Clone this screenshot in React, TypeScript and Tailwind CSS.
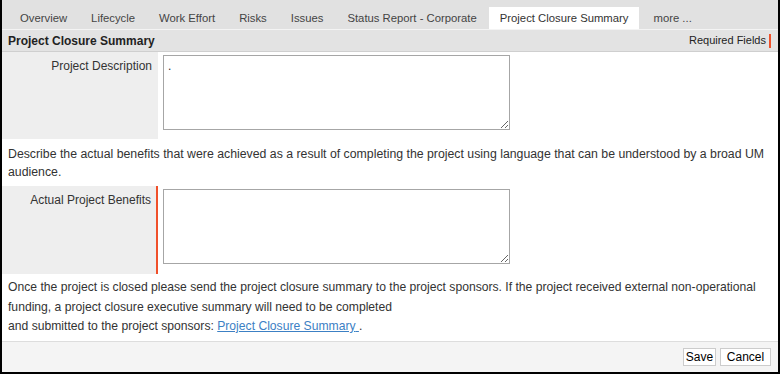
export default function App() {
  const tabs = [
    "Overview",
    "Lifecycle",
    "Work Effort",
    "Risks",
    "Issues",
    "Status Report - Corporate",
    "Project Closure Summary",
    "more ...",
  ];

  return (
    <div className="w-[780px] h-[374px] bg-white border-x-2 border-b-2 border-black overflow-hidden text-[12px] text-[#333] font-['Liberation_Sans',Arial,sans-serif]">
      {/* tab strip */}
      <div className="h-[29px] bg-[#e1e1e1] flex items-end pl-[6px] text-[11.3px]">
        {tabs.map((t) => (
          <div
            key={t}
            className={
              t === "Project Closure Summary"
                ? "h-[22px] px-[11px] flex items-center bg-white text-[#333] mr-[2px]"
                : "h-[22px] px-[12px] flex items-center text-[#444]"
            }
          >
            {t}
          </div>
        ))}
      </div>

      {/* section header */}
      <div className="h-[23px] bg-[#e3e3e3] border-t border-[#f4f4f4] border-b border-b-[#cfcfcf] flex items-center justify-between pl-[6px] pr-[7px]">
        <span className="font-bold text-[12px] text-[#222]">Project Closure Summary</span>
        <span className="flex items-center gap-[3px] text-[11px] text-[#222]">
          Required Fields
          <span className="w-[2px] h-[14px] bg-[#f0502a]" />
        </span>
      </div>

      {/* project description row */}
      <div className="flex h-[87px]">
        <div className="w-[156px] bg-[#eeeeee] text-right pr-[6px] pt-[5px] text-[#333]">Project Description</div>
        <div className="pl-[5px] pt-[3px]">
          <textarea
            defaultValue="."
            className="block w-[347px] h-[75px] border border-[#a6a6a6] bg-white px-[4px] py-[1px] text-[12px] text-[#333] outline-none resize"
          />
        </div>
      </div>

      <p className="px-[6px] pt-[6px] pb-[5px] leading-[18px] text-[12.3px]">
        Describe the actual benefits that were achieved as a result of completing the project using language that can be understood by a broad UM audience.
      </p>

      {/* benefits row */}
      <div className="flex h-[88px]">
        <div className="w-[156px] bg-[#eeeeee] border-r-2 border-[#f0502a] text-right pr-[5px] pt-[5px] text-[#333]">
          Actual Project Benefits
        </div>
        <div className="pl-[5px] pt-[3px]">
          <textarea className="block w-[347px] h-[75px] border border-[#a6a6a6] bg-white px-[4px] py-[1px] text-[12px] outline-none resize" />
        </div>
      </div>

      <div className="px-[6px] pt-[4px] leading-[19.5px] h-[67px] text-[12.15px]">
        <p>
          Once the project is closed please send the project closure summary to the project sponsors. If the project received external non-operational funding, a project closure executive summary will need to be completed
        </p>
        <p>
          and submitted to the project sponsors:{" "}
          <a href="#" className="text-[#3c80c4] underline">
            Project Closure Summary{" "}
          </a>
          .
        </p>
      </div>

      {/* footer */}
      <div className="h-[31px] bg-[#f4f4f4] border-t border-[#dddddd] flex items-center justify-end gap-[4px] pr-[7px]">
        <button className="h-[18px] w-[33px] bg-white border border-[#cccccc] text-[12px] text-black leading-none">Save</button>
        <button className="h-[18px] w-[51px] bg-white border border-[#cccccc] text-[12px] text-black leading-none">Cancel</button>
      </div>
    </div>
  );
}
